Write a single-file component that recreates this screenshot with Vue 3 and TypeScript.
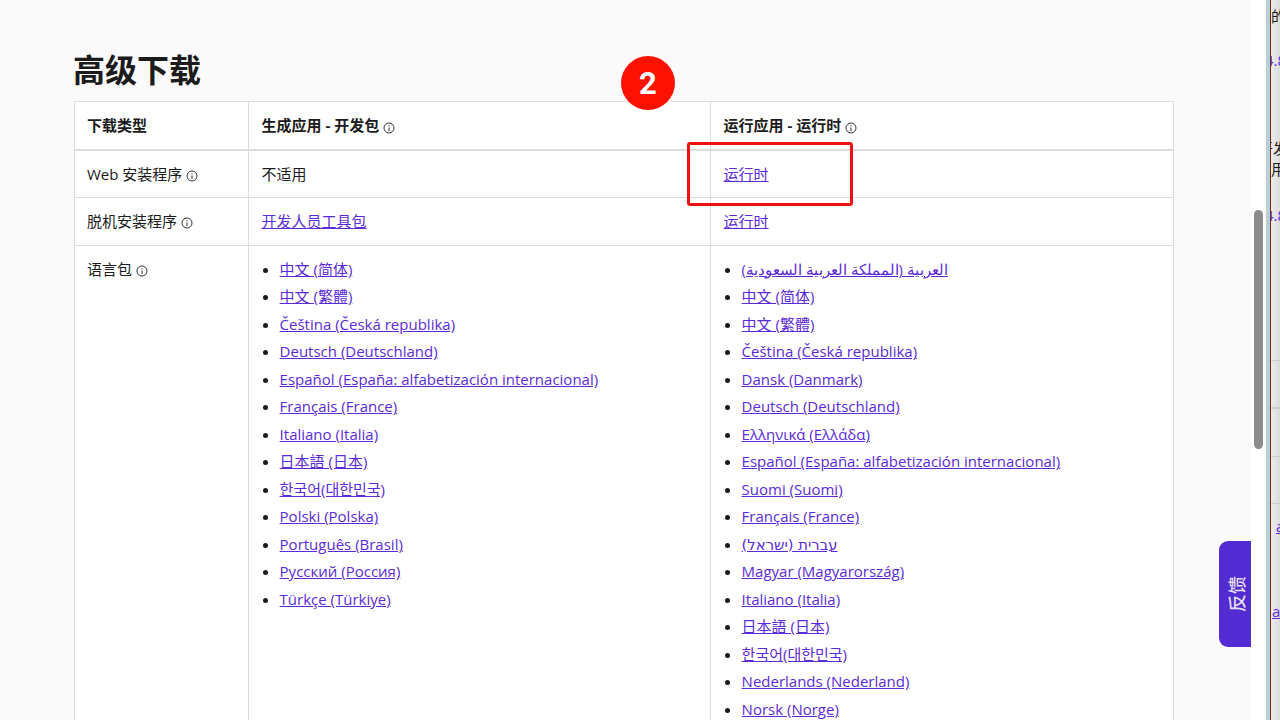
<script setup lang="ts">
interface Lang { text: string; cls?: string }
const sdk: Lang[] = [
  '中文 (简体)', '中文 (繁體)', 'Čeština (Česká republika)', 'Deutsch (Deutschland)',
  'Español (España: alfabetización internacional)', 'Français (France)', 'Italiano (Italia)',
  '日本語 (日本)', '한국어(대한민국)', 'Polski (Polska)', 'Português (Brasil)', 'Русский (Россия)',
  'Türkçe (Türkiye)'
].map((text) => ({ text }))
const runtime: Lang[] = [
  { text: 'العربية (المملكة العربية السعودية)', cls: 'ar' }, { text: '中文 (简体)' }, { text: '中文 (繁體)' },
  { text: 'Čeština (Česká republika)' }, { text: 'Dansk (Danmark)' }, { text: 'Deutsch (Deutschland)' },
  { text: 'Ελληνικά (Ελλάδα)' }, { text: 'Español (España: alfabetización internacional)' },
  { text: 'Suomi (Suomi)' }, { text: 'Français (France)' }, { text: 'עברית (ישראל)', cls: 'he' },
  { text: 'Magyar (Magyarország)' }, { text: 'Italiano (Italia)' }, { text: '日本語 (日本)' },
  { text: '한국어(대한민국)' }, { text: 'Nederlands (Nederland)' }, { text: 'Norsk (Norge)' }
]
</script>

<template>
  <div class="shot">
    <main class="page">
      <div class="content">
        <h2 class="title">高级下载</h2>
        <table class="grid">
          <colgroup>
            <col class="c1" />
            <col class="c2" />
            <col />
          </colgroup>
          <thead>
            <tr>
              <th>下载类型</th>
              <th>生成应用 - 开发包 <svg class="info" viewBox="0 0 12 12"><circle cx="6" cy="6" r="5" /><path d="M6 5.4V9M6 3.2v1.1" /></svg></th>
              <th>运行应用 - 运行时 <svg class="info" viewBox="0 0 12 12"><circle cx="6" cy="6" r="5" /><path d="M6 5.4V9M6 3.2v1.1" /></svg></th>
            </tr>
          </thead>
          <tbody>
            <tr class="r1">
              <td>Web 安装程序 <svg class="info" viewBox="0 0 12 12"><circle cx="6" cy="6" r="5" /><path d="M6 5.4V9M6 3.2v1.1" /></svg></td>
              <td>不适用</td>
              <td><a href="#">运行时</a></td>
            </tr>
            <tr class="r2">
              <td>脱机安装程序 <svg class="info" viewBox="0 0 12 12"><circle cx="6" cy="6" r="5" /><path d="M6 5.4V9M6 3.2v1.1" /></svg></td>
              <td><a href="#">开发人员工具包</a></td>
              <td><a href="#">运行时</a></td>
            </tr>
            <tr class="r3">
              <td>语言包 <svg class="info" viewBox="0 0 12 12"><circle cx="6" cy="6" r="5" /><path d="M6 5.4V9M6 3.2v1.1" /></svg></td>
              <td><ul><li v-for="l in sdk" :key="l.text"><a href="#">{{ l.text }}</a></li></ul></td>
              <td><ul><li v-for="l in runtime" :key="l.text"><a href="#" :class="l.cls">{{ l.text }}</a></li></ul></td>
            </tr>
          </tbody>
        </table>
      </div>
      <div class="gutter"></div>

      <div class="badge">2</div>
      <div class="mark"></div>
      <div class="thumb"></div>
      <div class="feedback"><span>反馈</span></div>
    </main>

    <aside class="strip">
      <span class="s" style="left: 0; top: 5px">的</span>
      <span class="s link" style="left: -6px; top: 49px">4.8</span>
      <span class="s" style="left: -13px; top: 137px">开发</span>
      <span class="s" style="left: 0; top: 158px">用</span>
      <span class="s link" style="left: -6px; top: 204px">4.8</span>
      <i class="ln" style="top: 360px"></i>
      <i class="ln lnb" style="top: 407px"></i>
      <i class="ln" style="top: 456px"></i>
      <i class="ln" style="top: 503px"></i>
      <span class="s link u" style="left: 0; top: 515px; width: 12px; text-indent: 5px">a</span>
      <span class="s link u" style="left: 0; top: 600px; width: 12px; text-indent: 1px">a</span>
    </aside>
  </div>
</template>

<style>
html, body { margin: 0; background: #fafafa; }
</style>

<style scoped>
.shot {
  display: flex;
  width: 1280px;
  height: 720px;
  overflow: hidden;
  font-family: "Open Sans", "Noto Sans CJK SC", sans-serif;
  color: #1b1b1b;
  font-size: 15px;
}
.page {
  position: relative;
  width: 1270px;
  flex: none;
  display: flex;
  box-sizing: border-box;
  background: #fafafa;
  border-right: 4px solid #b9cfd4;
}
.content {
  flex: 1;
  min-width: 0;
  padding-left: 74px;
}
.gutter {
  width: 15px;
  flex: none;
  background: #fff;
}
.title {
  margin: 0 0 0 -1px;
  padding-top: 48px;
  height: 53px;
  font-size: 32px;
  line-height: 44px;
  font-weight: 700;
  color: #1b1b1b;
}
.grid {
  width: 1100px;
  table-layout: fixed;
  border-collapse: collapse;
  background: #fff;
}
.c1 { width: 174px; }
.c2 { width: 462px; }
th, td {
  border: 1px solid #dcdde2;
  padding: 0 12px 0 12.6px;
  text-align: left;
  vertical-align: middle;
  line-height: 22px;
}
th:first-child, td:first-child { padding-left: 12px; }
thead tr { height: 48px; }
th { font-weight: 700; border-bottom-width: 2px; padding-bottom: 1.5px; }
.r1 { height: 48px; }
.r2 { height: 48px; }
.r2 td { padding-bottom: 2px; }
.r3 td { vertical-align: top; padding-top: 12px; height: 600px; }
a { color: #5b2bd9; text-decoration: underline; }
ul { margin: -0.4px 0 0; padding: 0 0 0 18px; }
li { height: 27.5px; line-height: 22px; }
li::marker { color: #1b1b1b; }
.he { font-family: "DejaVu Sans", sans-serif; font-size: 14.8px; }
.ar { font-size: 14.7px; }
.info {
  width: 12px;
  height: 12px;
  vertical-align: -2px;
  fill: none;
  stroke: #333;
  stroke-width: 1;
}
th .info { vertical-align: -3px; }
.badge {
  position: absolute;
  left: 621px;
  top: 56px;
  width: 54px;
  height: 54px;
  border-radius: 50%;
  background: #fe1100;
  color: #fff;
  font: 700 31px/55px Roboto, sans-serif;
  text-align: center;
}
.mark {
  position: absolute;
  left: 687px;
  top: 142px;
  width: 166px;
  height: 64px;
  box-sizing: border-box;
  border: 3px solid #f01010;
  border-radius: 3px;
}
.thumb {
  position: absolute;
  left: 1254px;
  top: 210px;
  width: 9px;
  height: 239px;
  border-radius: 5px;
  background: #8c8c8c;
}
.feedback {
  position: absolute;
  left: 1219px;
  top: 541px;
  width: 32px;
  height: 106px;
  box-sizing: border-box;
  padding-left: 2px;
  border-radius: 9px 0 0 9px;
  background: #532bd2;
  color: #e4dff8;
  display: flex;
  align-items: center;
  justify-content: center;
  font-size: 18px;
  font-weight: 500;
}
.feedback span {
  display: block;
  white-space: nowrap;
  transform: rotate(-90deg);
}
.strip {
  position: relative;
  flex: 1;
  background: linear-gradient(90deg, #ececec, #dcdcdc);
  border-left: 1px solid #7a2400;
  overflow: hidden;
  font-size: 15px;
}
.s { position: absolute; line-height: 22px; white-space: nowrap; }
.link { color: #5b2bd9; }
.u { text-decoration: underline; }
.ln { position: absolute; left: 0; right: 0; height: 1px; background: #cfcfcf; }
.lnb { height: 2px; }
</style>
